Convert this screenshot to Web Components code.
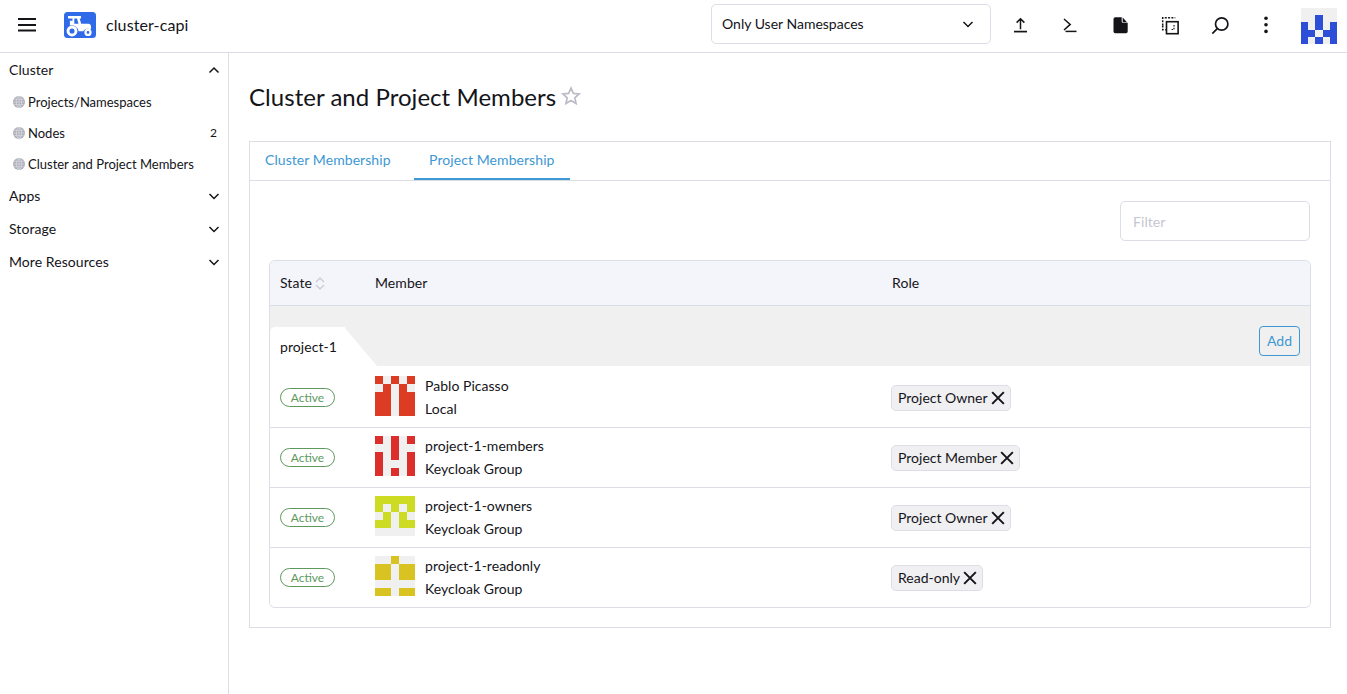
<!DOCTYPE html>
<html lang="en">
<head>
<meta charset="utf-8">
<title>Cluster and Project Members</title>
<style>
  html, body { margin: 0; height: 100%; background: #fff; }
  body {
    font-family: Lato, "Liberation Sans", sans-serif;
    font-size: 14px;
    letter-spacing: .07px;
    color: #141419;
    overflow: hidden;
    display: flex;
    flex-direction: column;
  }
  .below { display: flex; flex: 1; min-height: 0; }
</style>
</head>
<body>
  <top-bar></top-bar>
  <div class="below">
    <side-nav>
      <nav-group label="Cluster" open>
        <nav-item>Projects/Namespaces</nav-item>
        <nav-item count="2">Nodes</nav-item>
        <nav-item>Cluster and Project Members</nav-item>
      </nav-group>
      <nav-group label="Apps"></nav-group>
      <nav-group label="Storage"></nav-group>
      <nav-group label="More Resources"></nav-group>
    </side-nav>
    <members-page>
      <member-table>
        <group-row name="project-1"></group-row>
        <member-row first name="Pablo Picasso" source="Local" role="Project Owner" color="#dc3c24"
          cells="10101 01010 11011 11011 11011"></member-row>
        <member-row name="project-1-members" source="Keycloak Group" role="Project Member" color="#dc2e2a"
          cells="10101 00100 10101 10001 10101"></member-row>
        <member-row name="project-1-owners" source="Keycloak Group" role="Project Owner" color="#cddc22"
          cells="11111 10101 01010 11011 00000"></member-row>
        <member-row last name="project-1-readonly" source="Keycloak Group" role="Read-only" color="#d8c322"
          cells="00100 11011 11011 00000 11011"></member-row>
      </member-table>
    </members-page>
  </div>

<script>
const ICONS = {
  menu: '<path d="M3 6h18M3 12h18M3 17.5h18" stroke-width="2.2"/>',
  upload: '<path d="M12.5 5.6v10.6M8.6 9.6l3.9-3.9 3.9 3.9" stroke-width="1.5"/><path d="M6 18.6h13" stroke-width="1.7"/>',
  terminal: '<path d="M6 6l6.2 5.4L6 17" stroke-width="1.5"/><path d="M7.5 18.4h11" stroke-width="1.5"/>',
  file: '<path d="M7.3 4.3h6.400v4.300a1.200 1.200 0 0 0 1.200 1.200h4.800v8.700a1.800 1.800 0 0 1-1.800 1.800H7.300a1.800 1.800 0 0 1-1.800-1.800V6.100a1.800 1.800 0 0 1 1.800-1.800z" fill="currentColor" stroke="none"/><path d="M14.700 4.600l4.300 4.600h-4.300z" fill="currentColor" stroke="none"/>',
  layout: '<path d="M4.700 12.500V4.700h12.600" stroke-width="1.500" stroke-dasharray="2 1.300"/><path d="M4.700 12.500v4.300h3" stroke-width="1.500" stroke-dasharray="2 1.300"/><rect x="8.500" y="8.700" width="11.600" height="12" stroke-width="1.600"/><path d="M16 12v4.500h-3.600" stroke-width="1.200" stroke-dasharray="1.500 1.200"/>',
  search: '<circle cx="13.700" cy="11" r="6.200" stroke-width="1.700"/><path d="M9.300 15.600l-5 5" stroke-width="1.700"/>',
  kebab: '<circle cx="12" cy="5.200" r="1.800" fill="currentColor" stroke="none"/><circle cx="12" cy="11.800" r="1.800" fill="currentColor" stroke="none"/><circle cx="12" cy="18.400" r="1.800" fill="currentColor" stroke="none"/>',
  down: '<path d="M7.500 10l4.500 4.500 4.500-4.500" stroke-width="1.500"/>',
  up: '<path d="M7.500 14.500L12 10l4.500 4.500" stroke-width="1.500"/>',
  close: '<path d="M2 2l20 20M22 2L2 22" stroke-width="3.400"/>',
  star: '<path d="M12 3.400l2.600 5.700 6.200.7-4.600 4.200 1.300 6.100L12 17l-5.500 3.100 1.300-6.100-4.600-4.200 6.200-.7z" stroke-width="1.900"/>'
};

class UiIcon extends HTMLElement {
  connectedCallback() {
    const size = this.getAttribute('size') || 24;
    this.attachShadow({ mode: 'open' });
    this.shadowRoot.innerHTML = `
      <style>
        :host { display: inline-flex; flex: none; }
        svg { display: block; fill: none; stroke: currentColor; }
      </style>
      <svg width="${size}" height="${size}" viewBox="0 0 24 24">${ICONS[this.getAttribute('name')]}</svg>
    `;
  }
}
customElements.define('ui-icon', UiIcon);

class PixelAvatar extends HTMLElement {
  connectedCallback() {
    const color = this.getAttribute('color');
    const bits = (this.getAttribute('cells') || '').replace(/\s/g, '');
    const cells = [...bits].map(b => `<i style="background:${b === '1' ? color : '#f0f0f0'}"></i>`).join('');
    this.attachShadow({ mode: 'open' });
    this.shadowRoot.innerHTML = `
      <style>
        :host {
          display: grid;
          flex: none;
          width: var(--size, 40px);
          height: var(--size, 40px);
          grid-template: repeat(5, 1fr) / repeat(5, 1fr);
        }
      </style>
      ${cells}
    `;
  }
}
customElements.define('pixel-avatar', PixelAvatar);

class TopBar extends HTMLElement {
  connectedCallback() {
    const actions = ['upload', 'terminal', 'file', 'layout', 'search']
      .map(n => `<div class="act"><ui-icon name="${n}"></ui-icon></div>`).join('');
    this.attachShadow({ mode: 'open' });
    this.shadowRoot.innerHTML = `
      <style>
        :host {
          display: flex;
          flex: none;
          height: 48px;
          border-bottom: 1px solid #dcdee7;
          padding: 4px 10px 0 15px;
        }
        .burger { width: 24px; height: 42px; display: flex; align-items: center; }
        .logo { margin: 8px 10px 0 25px; width: 32px; height: 26px; }
        .name { font-size: 16px; line-height: 42px; letter-spacing: .1px; }
        .spacer { flex: 1; }
        .ns {
          width: 258px;
          height: 38px;
          margin-right: 4px;
          border: 1px solid #dcdee7;
          border-radius: 5px;
          display: flex;
          align-items: center;
          justify-content: space-between;
          padding: 0 10px;
          letter-spacing: 0;
        }
        .ns span { padding-bottom: 2px; }
        .act { width: 50px; height: 42px; display: flex; align-items: center; justify-content: center; }
        .act.more { width: 42px; }
        pixel-avatar { --size: 36px; margin: 4px 0 0 14px; }
      </style>
      <div class="burger"><ui-icon name="menu"></ui-icon></div>
      <svg class="logo" viewBox="0 0 32 26">
        <rect width="32" height="26" rx="3.500" fill="#2f6be8"/>
        <path fill="#fff" d="M4 4h13v2.600h-1.400l1.600 5.200h7.300c1.400 0 2.500 1.100 2.500 2.500v3.200a6 6 0 0 0-7.800 1.700h-4.600a7.200 7.200 0 0 0-8.700-5.700V8.800h2.600V6.600H4zm6.300 2.600v5.200h4.200l-1.500-5.200z"/>
        <circle cx="8" cy="19" r="4" fill="none" stroke="#fff" stroke-width="2.900"/>
        <circle cx="24" cy="20.400" r="2.500" fill="none" stroke="#fff" stroke-width="2.200"/>
      </svg>
      <span class="name">cluster-capi</span>
      <div class="spacer"></div>
      <div class="ns"><span>Only User Namespaces</span><ui-icon name="down"></ui-icon></div>
      ${actions}
      <div class="act more"><ui-icon name="kebab"></ui-icon></div>
      <pixel-avatar color="#2d4fd8" cells="00000 00100 10101 11011 10101"></pixel-avatar>
    `;
  }
}
customElements.define('top-bar', TopBar);

class SideNav extends HTMLElement {
  constructor() {
    super();
    this.attachShadow({ mode: 'open' });
    this.shadowRoot.innerHTML = `
      <style>
        :host {
          display: block;
          flex: none;
          width: 228px;
          border-right: 1px solid #dcdee7;
        }
      </style>
      <slot></slot>
    `;
  }
}
customElements.define('side-nav', SideNav);

class NavGroup extends HTMLElement {
  connectedCallback() {
    const open = this.hasAttribute('open');
    this.attachShadow({ mode: 'open' });
    this.shadowRoot.innerHTML = `
      <style>
        :host { display: block; }
        .head {
          display: flex;
          align-items: center;
          justify-content: space-between;
          height: 33px;
          padding: 0 2px 0 9px;
        }
      </style>
      <div class="head">
        <span>${this.getAttribute('label')}</span>
        <ui-icon name="${open ? 'up' : 'down'}"></ui-icon>
      </div>
      <slot></slot>
    `;
  }
}
customElements.define('nav-group', NavGroup);

class NavItem extends HTMLElement {
  connectedCallback() {
    const count = this.getAttribute('count');
    this.attachShadow({ mode: 'open' });
    this.shadowRoot.innerHTML = `
      <style>
        :host {
          display: flex;
          align-items: center;
          height: 31px;
          padding: 0 11px 0 13px;
          font-size: 13px;
          letter-spacing: 0;
        }
        svg { width: 12px; height: 12px; margin-right: 3px; flex: none; }
        .label { flex: 1; }
        .count { font-size: 12px; }
      </style>
      <svg viewBox="0 0 12 12">
        <circle cx="6" cy="6" r="6" fill="#aeaeba"/>
        <g fill="none" stroke="#dcdce4" stroke-width=".7">
          <ellipse cx="6" cy="6" rx="2.700" ry="5.500"/>
          <path d="M6 .5v11M.5 6h11M1.300 3.300h9.400M1.300 8.700h9.400"/>
        </g>
      </svg>
      <span class="label"><slot></slot></span>
      ${count ? `<span class="count">${count}</span>` : ''}
    `;
  }
}
customElements.define('nav-item', NavItem);

class MembersPage extends HTMLElement {
  constructor() {
    super();
    this.attachShadow({ mode: 'open' });
    this.shadowRoot.innerHTML = `
      <style>
        :host {
          display: block;
          flex: 1;
          min-width: 0;
          padding: 20px 16px 0 20px;
        }
        .title { display: flex; align-items: center; height: 48px; margin: 0 0 20px; }
        h1 { font-size: 24px; font-weight: 400; margin: 0; line-height: 48px; letter-spacing: .04px; }
        ui-icon { margin: -2px 0 0 4px; color: #bcbcc8; }
        .box { border: 1px solid #dcdee7; }
        .tabs { display: flex; gap: 8px; height: 38px; border-bottom: 1px solid #dcdee7; }
        .tab {
          padding: 0 15px;
          line-height: 35px;
          height: 38px;
          box-sizing: border-box;
          color: #3d98d3;
        }
        .tab.on { border-bottom: 2px solid #3d98d3; }
        .panel { padding: 20px; }
        .filter {
          width: 190px;
          height: 40px;
          margin: 0 0 20px auto;
          box-sizing: border-box;
          border: 1px solid #dcdee7;
          border-radius: 5px;
          padding: 0 12px;
          line-height: 40px;
          color: #c6c6d2;
        }
      </style>
      <div class="title">
        <h1>Cluster and Project Members</h1>
        <ui-icon name="star" size="22"></ui-icon>
      </div>
      <div class="box">
        <div class="tabs">
          <div class="tab" style="margin-right: .5px">Cluster Membership</div>
          <div class="tab on">Project Membership</div>
        </div>
        <div class="panel">
          <div class="filter">Filter</div>
          <slot></slot>
        </div>
      </div>
    `;
  }
}
customElements.define('members-page', MembersPage);

class MemberTable extends HTMLElement {
  constructor() {
    super();
    this.attachShadow({ mode: 'open' });
    this.shadowRoot.innerHTML = `
      <style>
        :host {
          display: block;
          box-shadow: 0 0 0 1px #dcdee7;
          border-radius: 5px;
          overflow: hidden;
          --cols: 95px 516px 1fr;
        }
        .head {
          display: grid;
          grid-template-columns: var(--cols);
          align-items: center;
          height: 42px;
          padding-bottom: 2px;
          background: #f4f5fa;
          border-bottom: 1px solid #dcdee7;
        }
        .head div { padding-left: 10px; display: flex; align-items: center; }
        .head div:nth-child(3) { padding-left: 11px; }
        svg { margin: 2px 0 0 3px; width: 10px; height: 15px; fill: none; stroke: #c8c8d2; stroke-width: 1.200; }
      </style>
      <div class="head">
        <div>State<svg viewBox="0 0 10 15"><path d="M1 6l4-4 4 4M1 9l4 4 4-4"/></svg></div>
        <div>Member</div>
        <div>Role</div>
      </div>
      <slot></slot>
    `;
  }
}
customElements.define('member-table', MemberTable);

class GroupRow extends HTMLElement {
  connectedCallback() {
    this.attachShadow({ mode: 'open' });
    this.shadowRoot.innerHTML = `
      <style>
        :host {
          display: flex;
          align-items: flex-end;
          height: 60px;
          background: #f0f0f0;
        }
        .tab {
          height: 39px;
          line-height: 40px;
          padding: 0 8px 0 10px;
          background: #fff;
          border-top-left-radius: 5px;
        }
        .slant {
          width: 33px;
          height: 39px;
          background: #fff;
          margin-left: -1px;
          clip-path: polygon(0 0, 100% 100%, 0 100%);
        }
        button {
          margin: auto 10px 10px auto;
          height: 30px;
          width: 41px;
          padding: 0 0 2px;
          font: inherit;
          letter-spacing: inherit;
          color: #3d98d3;
          background: transparent;
          border: 1px solid #3d98d3;
          border-radius: 4px;
        }
      </style>
      <div class="tab">${this.getAttribute('name')}</div>
      <div class="slant"></div>
      <button>Add</button>
    `;
  }
}
customElements.define('group-row', GroupRow);

class RoleChip extends HTMLElement {
  constructor() {
    super();
    this.attachShadow({ mode: 'open' });
    this.shadowRoot.innerHTML = `
      <style>
        :host {
          display: inline-flex;
          align-items: center;
          gap: 3px;
          height: 26px;
          box-sizing: border-box;
          padding: 0 5px 0 6px;
          letter-spacing: 0;
          background: #f0f0f2;
          border: 1px solid #dcdee7;
          border-radius: 5px;
          vertical-align: middle;
        }
      </style>
      <slot></slot>
      <ui-icon name="close" size="14"></ui-icon>
    `;
  }
}
customElements.define('role-chip', RoleChip);

class StateBadge extends HTMLElement {
  constructor() {
    super();
    this.attachShadow({ mode: 'open' });
    this.shadowRoot.innerHTML = `
      <style>
        :host {
          display: inline-block;
          box-sizing: border-box;
          width: 55px;
          height: 19px;
          line-height: 17px;
          text-align: center;
          font-size: 12px;
          letter-spacing: 0;
          color: #5d995d;
          border: 1px solid #5d995d;
          border-radius: 10px;
        }
      </style>
      <slot></slot>
    `;
  }
}
customElements.define('state-badge', StateBadge);

class MemberRow extends HTMLElement {
  connectedCallback() {
    this.attachShadow({ mode: 'open' });
    this.shadowRoot.innerHTML = `
      <style>
        :host {
          display: grid;
          grid-template-columns: var(--cols);
          align-items: center;
          min-height: 59px;
          border-bottom: 1px solid #dcdee7;
          background: #fff;
        }
        :host([first]) { padding-top: 2px; }
        :host([last]) { border-bottom: 0; }
        .cell { padding-left: 10px; }
        .member { display: flex; gap: 10px; align-self: start; padding-top: 8px; }
        .who { line-height: 23px; margin-top: -2px; letter-spacing: .03px; }
      </style>
      <div class="cell"><state-badge>Active</state-badge></div>
      <div class="cell member">
        <pixel-avatar color="${this.getAttribute('color')}" cells="${this.getAttribute('cells')}"></pixel-avatar>
        <div class="who">
          <div>${this.getAttribute('name')}</div>
          <div>${this.getAttribute('source')}</div>
        </div>
      </div>
      <div class="cell"><role-chip>${this.getAttribute('role')}</role-chip></div>
    `;
  }
}
customElements.define('member-row', MemberRow);
</script>
</body>
</html>
